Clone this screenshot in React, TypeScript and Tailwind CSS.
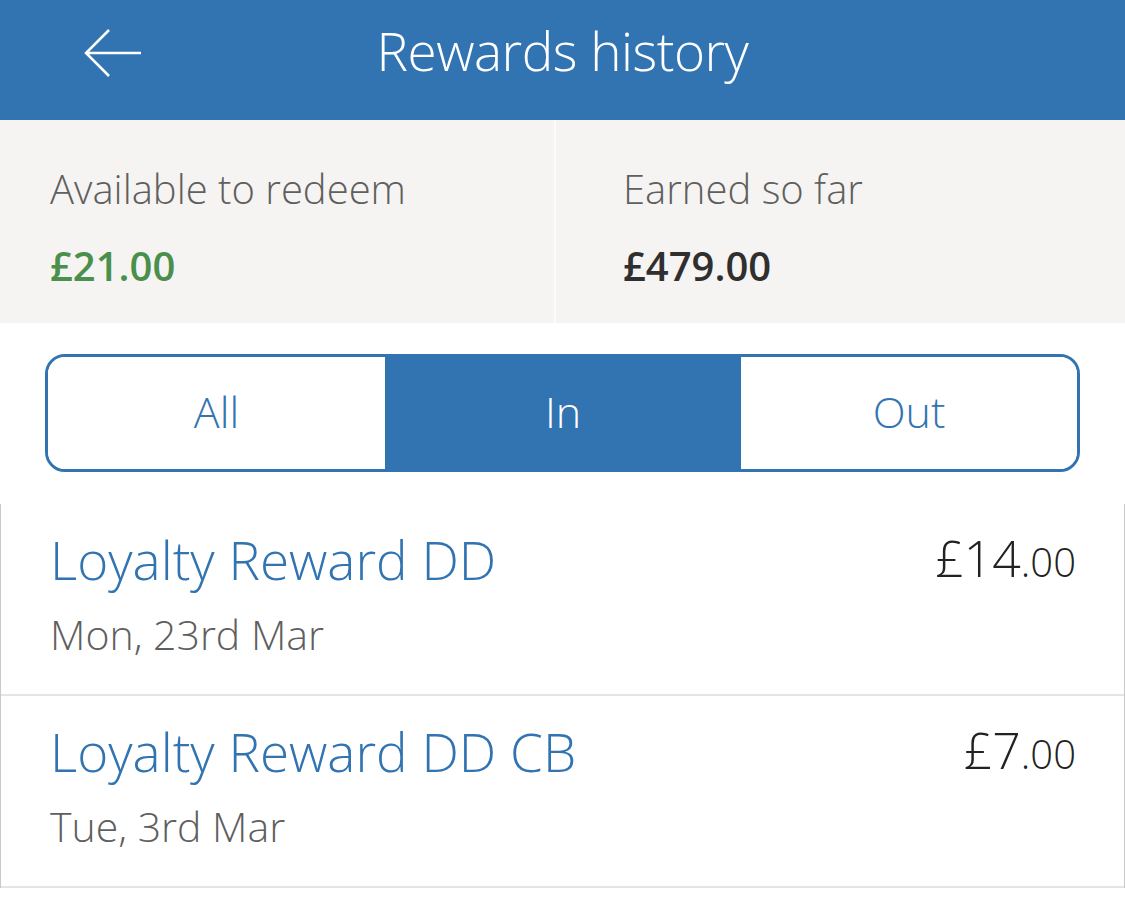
import { useState } from "react";

const rows = [
  { title: "Loyalty Reward DD", date: "Mon, 23rd Mar", pounds: "£14", pence: ".00" },
  { title: "Loyalty Reward DD CB", date: "Tue, 3rd Mar", pounds: "£7", pence: ".00" },
];

export default function App() {
  const [tab, setTab] = useState("In");
  const tabs = ["All", "In", "Out"];
  return (
    <div className="w-[1125px] h-[904px] overflow-hidden bg-white font-['Open_Sans',sans-serif]">
      <header className="h-[120px] bg-[#3274b1] flex items-center relative">
        <button className="absolute left-[84px] top-[28px] w-[60px] h-[52px] flex items-center">
          <svg width="58" height="52" viewBox="0 0 58 52" fill="none" stroke="white" strokeWidth="2.5">
            <path d="M2 25h55M25 2L2 25l23 23" />
          </svg>
        </button>
        <h1 className="w-full text-center text-white text-[53px] font-light tracking-[-0.5px] leading-none pb-[20px]">
          Rewards history
        </h1>
      </header>

      <section className="h-[203px] bg-[#f5f4f2] grid grid-cols-[556px_1fr]">
        <div className="border-r-2 border-[#fbfbfa] pl-[50px] pt-[45px]">
          <p className="text-[40px] leading-[48px] text-[#5f5f5f] font-light">Available to redeem</p>
          <p className="text-[40px] leading-[48px] mt-[29px] text-[#4a8f4b] font-semibold">£21.00</p>
        </div>
        <div className="pl-[67px] pt-[45px]">
          <p className="text-[40px] leading-[48px] text-[#5f5f5f] font-light">Earned so far</p>
          <p className="text-[40px] leading-[48px] mt-[29px] text-[#2f2f2f] font-semibold">£479.00</p>
        </div>
      </section>

      <div className="px-[45px] pt-[31px] pb-[32px]">
        <div className="flex h-[118px] rounded-[20px] border-[3px] border-[#3274b1] overflow-hidden">
          {tabs.map((t) => (
            <button
              key={t}
              onClick={() => setTab(t)}
              className={
                (t === "All" ? "w-[337px] " : t === "In" ? "w-[356px] " : "flex-1 ") +
                (tab === t ? "bg-[#3274b1] text-white " : "bg-white text-[#3274b1] ") +
                "text-[43px] font-light flex items-center justify-center pb-[2px]"
              }
            >
              {t}
            </button>
          ))}
        </div>
      </div>

      <ul className="border-x border-[#c8c8c8]">
        {rows.map((r) => (
          <li key={r.title} className="h-[192px] border-b-2 border-[#e4e4e4] flex justify-between pl-[49px] pr-[48px] pt-[24px]">
            <div>
              <p className="text-[53px] leading-[64px] text-[#3274b1] font-light">{r.title}</p>
              <p className="text-[41px] leading-[50px] mt-[17px] text-[#5f5f5f] font-light">{r.date}</p>
            </div>
            <p className="text-[#222] font-light leading-[60px]">
              <span className="text-[50px]">{r.pounds}</span>
              <span className="text-[40px]">{r.pence}</span>
            </p>
          </li>
        ))}
      </ul>
    </div>
  );
}
